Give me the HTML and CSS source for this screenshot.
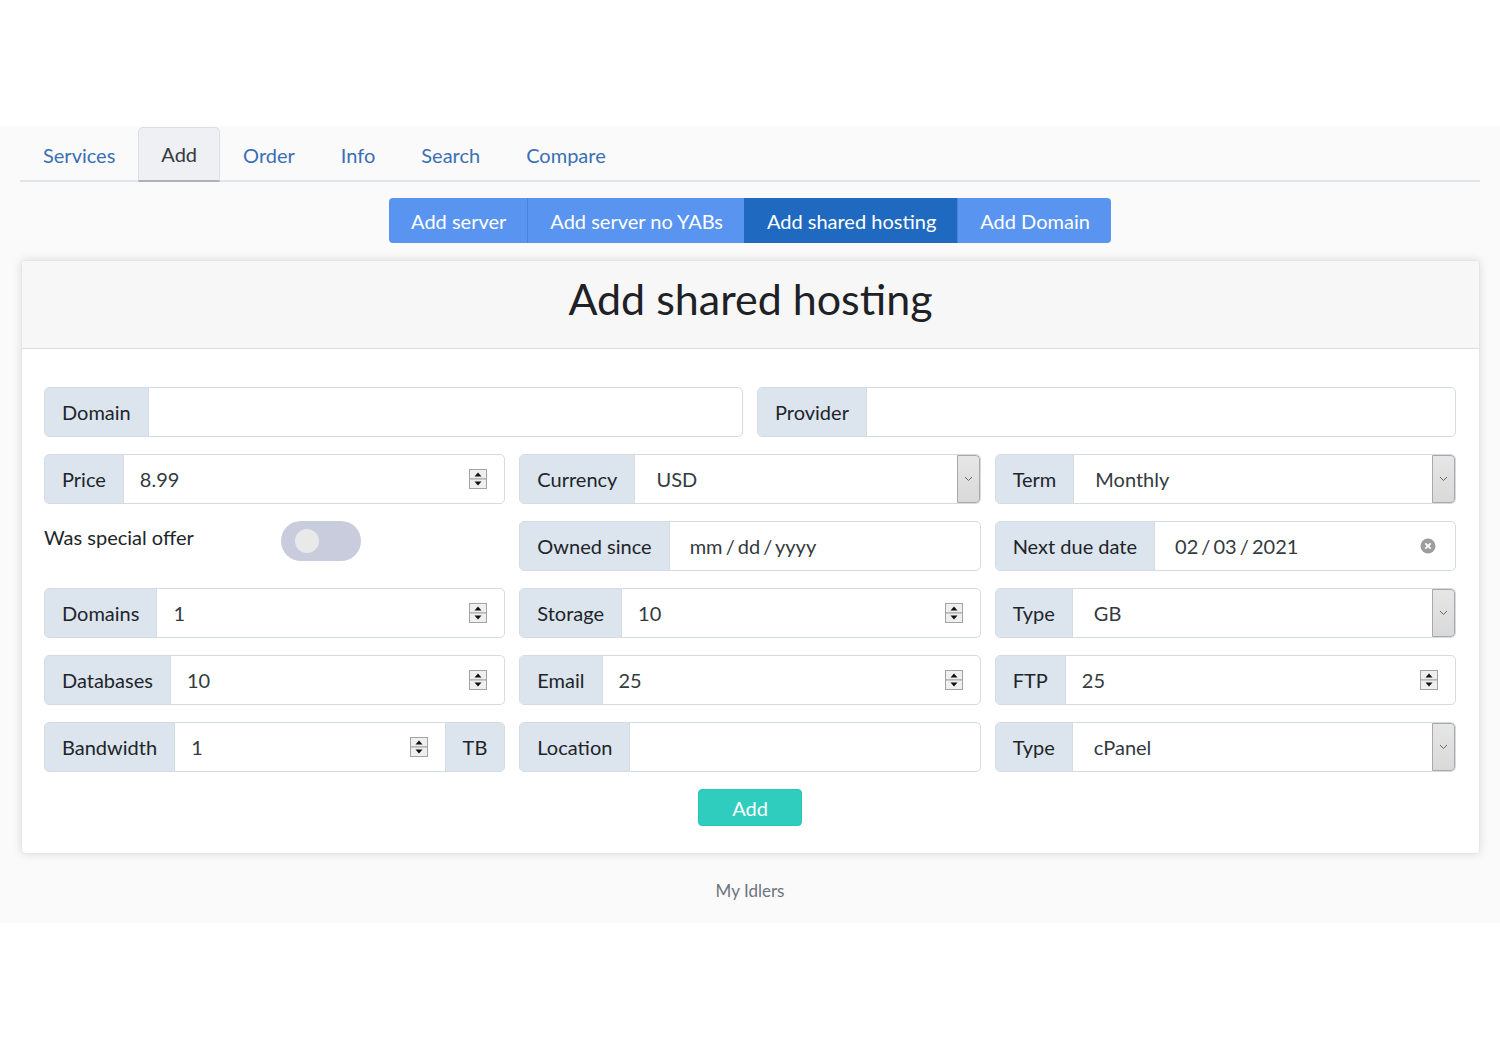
FILE: index.html
```html
<!DOCTYPE html>
<html lang="en">
<head>
<meta charset="utf-8">
<title>Add shared hosting - My Idlers</title>
<link rel="stylesheet" href="styles.css">
</head>
<body>
<div class="topspace"></div>
<div class="page">
  <nav class="tabs">
    <a class="tab" href="#">Services</a>
    <a class="tab active" href="#">Add</a>
    <a class="tab" href="#">Order</a>
    <a class="tab" href="#">Info</a>
    <a class="tab" href="#">Search</a>
    <a class="tab" href="#">Compare</a>
  </nav>

  <div class="btn-row">
    <div class="btn-group">
      <a class="bg-btn" href="#">Add server</a>
      <a class="bg-btn" href="#">Add server no YABs</a>
      <a class="bg-btn active" href="#">Add shared hosting</a>
      <a class="bg-btn" href="#">Add Domain</a>
    </div>
  </div>

  <section class="card">
    <header class="card-header"><h2>Add shared hosting</h2></header>
    <form class="card-body">
      <div class="row two">
        <div class="ig"><span class="ig-label">Domain</span><div class="ig-field"><input type="text"></div></div>
        <div class="ig"><span class="ig-label">Provider</span><div class="ig-field"><input type="text"></div></div>
      </div>

      <div class="row three">
        <div class="ig"><span class="ig-label">Price</span><div class="ig-field"><input type="text" value="8.99"><span class="spin"><svg width="18" height="20" viewBox="0 0 18 20"><rect x="0.5" y="0.5" width="17" height="9.5" fill="#efefef" stroke="#a3a3a3"/><rect x="0.5" y="10" width="17" height="9.5" fill="#efefef" stroke="#a3a3a3"/><path d="M5.5 7.5h7L9 3.5z" fill="#111"/><path d="M5.5 12.5h7L9 16.5z" fill="#111"/></svg></span></div></div>
        <div class="ig"><span class="ig-label">Currency</span><div class="ig-field sel"><span class="val">USD</span><span class="arrow"><svg width="9" height="6" viewBox="0 0 9 6"><path d="M1 1l3.5 3.5L8 1" fill="none" stroke="#666" stroke-width="1"/></svg></span></div></div>
        <div class="ig"><span class="ig-label">Term</span><div class="ig-field sel"><span class="val">Monthly</span><span class="arrow"><svg width="9" height="6" viewBox="0 0 9 6"><path d="M1 1l3.5 3.5L8 1" fill="none" stroke="#666" stroke-width="1"/></svg></span></div></div>
      </div>

      <div class="row three">
        <div class="switch-row"><span class="switch-label">Was special offer</span><span class="switch"><span class="knob"></span></span></div>
        <div class="ig"><span class="ig-label">Owned since</span><div class="ig-field"><span class="date">mm / dd / yyyy</span></div></div>
        <div class="ig"><span class="ig-label">Next due date</span><div class="ig-field"><span class="date">02 / 03 / 2021</span><span class="clear"><svg width="16" height="16" viewBox="0 0 16 16"><circle cx="8" cy="8" r="7.5" fill="#9d9d9d"/><path d="M5.3 5.3l5.4 5.4M10.7 5.3l-5.4 5.4" stroke="#fff" stroke-width="1.8"/></svg></span></div></div>
      </div>

      <div class="row three">
        <div class="ig"><span class="ig-label">Domains</span><div class="ig-field"><input type="text" value="1"><span class="spin"><svg width="18" height="20" viewBox="0 0 18 20"><rect x="0.5" y="0.5" width="17" height="9.5" fill="#efefef" stroke="#a3a3a3"/><rect x="0.5" y="10" width="17" height="9.5" fill="#efefef" stroke="#a3a3a3"/><path d="M5.5 7.5h7L9 3.5z" fill="#111"/><path d="M5.5 12.5h7L9 16.5z" fill="#111"/></svg></span></div></div>
        <div class="ig"><span class="ig-label">Storage</span><div class="ig-field"><input type="text" value="10"><span class="spin"><svg width="18" height="20" viewBox="0 0 18 20"><rect x="0.5" y="0.5" width="17" height="9.5" fill="#efefef" stroke="#a3a3a3"/><rect x="0.5" y="10" width="17" height="9.5" fill="#efefef" stroke="#a3a3a3"/><path d="M5.5 7.5h7L9 3.5z" fill="#111"/><path d="M5.5 12.5h7L9 16.5z" fill="#111"/></svg></span></div></div>
        <div class="ig"><span class="ig-label">Type</span><div class="ig-field sel"><span class="val">GB</span><span class="arrow"><svg width="9" height="6" viewBox="0 0 9 6"><path d="M1 1l3.5 3.5L8 1" fill="none" stroke="#666" stroke-width="1"/></svg></span></div></div>
      </div>

      <div class="row three">
        <div class="ig"><span class="ig-label">Databases</span><div class="ig-field"><input type="text" value="10"><span class="spin"><svg width="18" height="20" viewBox="0 0 18 20"><rect x="0.5" y="0.5" width="17" height="9.5" fill="#efefef" stroke="#a3a3a3"/><rect x="0.5" y="10" width="17" height="9.5" fill="#efefef" stroke="#a3a3a3"/><path d="M5.5 7.5h7L9 3.5z" fill="#111"/><path d="M5.5 12.5h7L9 16.5z" fill="#111"/></svg></span></div></div>
        <div class="ig"><span class="ig-label">Email</span><div class="ig-field"><input type="text" value="25"><span class="spin"><svg width="18" height="20" viewBox="0 0 18 20"><rect x="0.5" y="0.5" width="17" height="9.5" fill="#efefef" stroke="#a3a3a3"/><rect x="0.5" y="10" width="17" height="9.5" fill="#efefef" stroke="#a3a3a3"/><path d="M5.5 7.5h7L9 3.5z" fill="#111"/><path d="M5.5 12.5h7L9 16.5z" fill="#111"/></svg></span></div></div>
        <div class="ig"><span class="ig-label">FTP</span><div class="ig-field"><input type="text" value="25"><span class="spin"><svg width="18" height="20" viewBox="0 0 18 20"><rect x="0.5" y="0.5" width="17" height="9.5" fill="#efefef" stroke="#a3a3a3"/><rect x="0.5" y="10" width="17" height="9.5" fill="#efefef" stroke="#a3a3a3"/><path d="M5.5 7.5h7L9 3.5z" fill="#111"/><path d="M5.5 12.5h7L9 16.5z" fill="#111"/></svg></span></div></div>
      </div>

      <div class="row three">
        <div class="ig"><span class="ig-label">Bandwidth</span><div class="ig-field"><input type="text" value="1"><span class="spin"><svg width="18" height="20" viewBox="0 0 18 20"><rect x="0.5" y="0.5" width="17" height="9.5" fill="#efefef" stroke="#a3a3a3"/><rect x="0.5" y="10" width="17" height="9.5" fill="#efefef" stroke="#a3a3a3"/><path d="M5.5 7.5h7L9 3.5z" fill="#111"/><path d="M5.5 12.5h7L9 16.5z" fill="#111"/></svg></span></div><span class="ig-label append">TB</span></div>
        <div class="ig"><span class="ig-label">Location</span><div class="ig-field"><input type="text"></div></div>
        <div class="ig"><span class="ig-label">Type</span><div class="ig-field sel"><span class="val">cPanel</span><span class="arrow"><svg width="9" height="6" viewBox="0 0 9 6"><path d="M1 1l3.5 3.5L8 1" fill="none" stroke="#666" stroke-width="1"/></svg></span></div></div>
      </div>

      <div class="actions"><button type="button" class="add-btn">Add</button></div>
    </form>
  </section>

  <footer class="footer">My Idlers</footer>
</div>
</body>
</html>
```

FILE: styles.css
```css
* { box-sizing: border-box; }

html, body {
  margin: 0;
  padding: 0;
  background: #ffffff;
  font-family: Lato, "Open Sans", "Liberation Sans", sans-serif;
  color: #212529;
}

.topspace { height: 126px; }

.page {
  background: #fafafa;
  padding: 1px 20px 0;
}

/* Tabs */
.tabs {
  display: flex;
  height: 55px;
  border-bottom: 2px solid #e2e5e8;
}

.tab {
  display: flex;
  align-items: center;
  padding: 0 22px;
  font-size: 20px;
  color: #3a6fb3;
  text-decoration: none;
  margin-bottom: -2px;
  border: 1px solid transparent;
  border-radius: 5px 5px 0 0;
}

.tab.active {
  background: #eef0f3;
  color: #343a40;
  border-color: #dcdfe3;
  border-bottom: 2px solid #aeb2b7;
}

/* Button group */
.btn-row {
  display: flex;
  justify-content: center;
  margin-top: 16px;
}

.btn-group {
  display: flex;
  height: 45px;
  border-radius: 4px;
  overflow: hidden;
}

.bg-btn {
  display: flex;
  align-items: center;
  padding: 0 21px 0 22px;
  background: #5994f1;
  color: #ffffff;
  font-size: 20px;
  text-decoration: none;
  border-left: 1px solid #4a83dc;
}

.bg-btn:first-child { border-left: none; }

.bg-btn.active {
  background: #1f69c1;
  border-left-color: #1f69c1;
}

/* Card */
.card {
  margin-top: 17px;
  margin-left: 1px;
  background: #ffffff;
  border: 1px solid #e6e6e6;
  border-radius: 4px;
  box-shadow: 0 0 10px rgba(0, 0, 0, 0.12);
}

.card-header {
  height: 88px;
  background: #f7f7f7;
  border-bottom: 1px solid #dedede;
  display: flex;
  align-items: center;
  justify-content: center;
  border-radius: 4px 4px 0 0;
}

.card-header h2 {
  margin: 0 0 12px;
  font-size: 43px;
  font-weight: 400;
  color: #1e2125;
}

.card-body {
  padding: 38px 23px 27px 22px;
  display: flex;
  flex-direction: column;
  gap: 17px;
}

.row { display: grid; column-gap: 14px; }
.row.two { grid-template-columns: 1fr 1fr; }
.row.three { grid-template-columns: 1fr 1fr 1fr; }

/* Input group */
.ig {
  display: flex;
  height: 50px;
  border: 1px solid #d5dbe2;
  border-radius: 5px;
  overflow: hidden;
  background: #ffffff;
  min-width: 0;
}

.ig-label {
  display: flex;
  align-items: center;
  padding: 0 17px;
  background: #dce4ee;
  border-right: 1px solid #d5dbe2;
  font-size: 20px;
  color: #212529;
  white-space: nowrap;
}

.ig-label.append {
  border-right: none;
  border-left: 1px solid #d5dbe2;
}

.ig-field {
  flex: 1;
  display: flex;
  align-items: center;
  min-width: 0;
}

.ig-field input {
  flex: 1;
  min-width: 0;
  height: 100%;
  border: 0;
  outline: 0;
  background: transparent;
  font-family: inherit;
  font-size: 20px;
  color: #343a40;
  padding: 0 16px;
}

.spin {
  display: flex;
  margin-right: 17px;
}

.sel .val {
  flex: 1;
  padding: 0 21px;
  font-size: 20px;
  color: #343a40;
}

.sel .arrow {
  align-self: stretch;
  width: 23px;
  display: flex;
  align-items: center;
  justify-content: center;
  background: linear-gradient(#e6e6e6, #d9d9d9);
  border: 1px solid #a9a9a9;
  border-radius: 0 4px 4px 0;
}

.date {
  flex: 1;
  padding: 0 20px;
  font-size: 20px;
  color: #343a40;
  word-spacing: -2px;
}

.clear {
  display: flex;
  margin-right: 19px;
}

/* Switch */
.switch-row {
  display: flex;
  align-items: flex-start;
}

.switch-label {
  width: 237px;
  font-size: 20px;
  line-height: 32px;
  color: #212529;
}

.switch {
  width: 80px;
  height: 40px;
  border-radius: 20px;
  background: #c9ccdc;
  display: flex;
  align-items: center;
  padding-left: 14px;
}

.knob {
  width: 24px;
  height: 24px;
  border-radius: 50%;
  background: #e9e9ea;
}

/* Add button */
.actions {
  display: flex;
  justify-content: center;
}

.add-btn {
  width: 104px;
  height: 37px;
  border: 1px solid #2ac6b7;
  border-radius: 4px;
  background: #2fcdbe;
  color: #ffffff;
  font-family: inherit;
  font-size: 20px;
  padding: 0;
}

/* Footer */
.footer {
  text-align: center;
  font-size: 17px;
  line-height: 24px;
  color: #6c757d;
  padding: 25px 0 20px;
}
```
